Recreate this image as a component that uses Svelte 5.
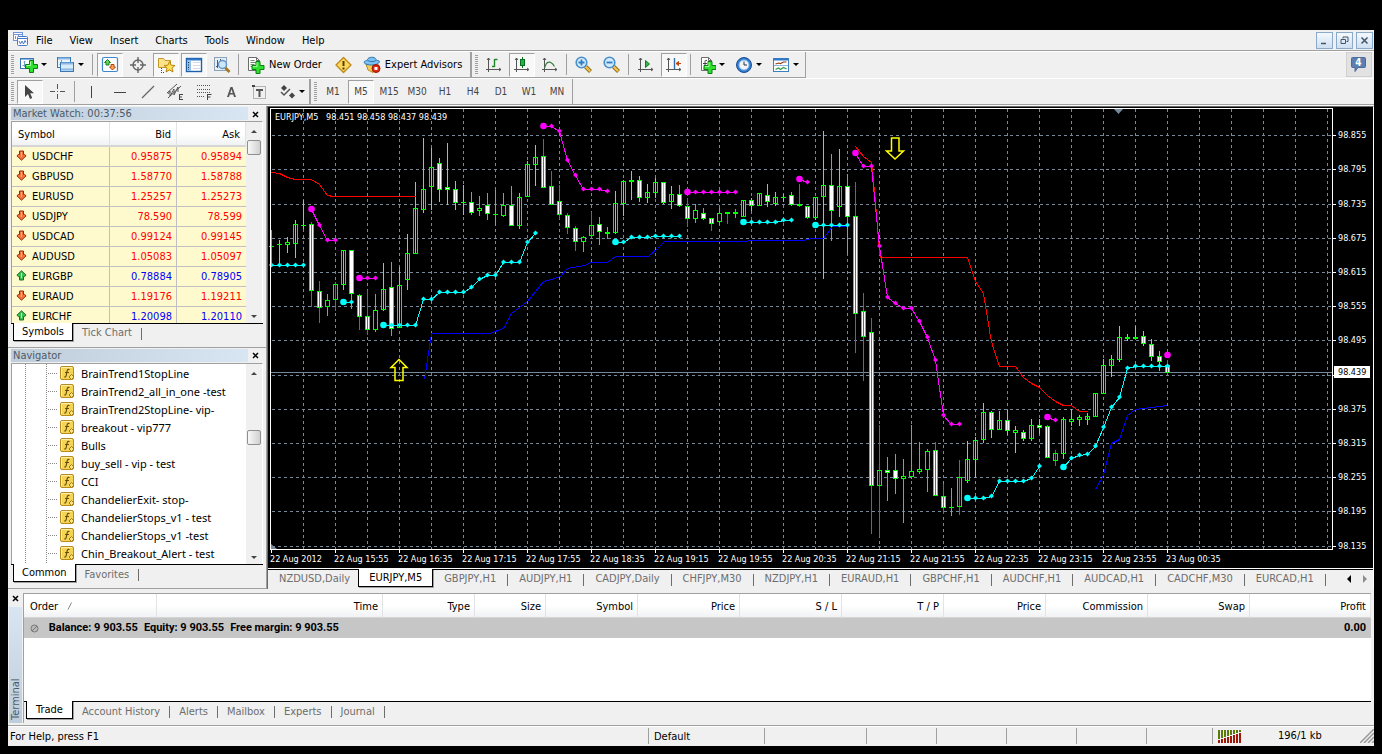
<script>
  const menus = ['File', 'View', 'Insert', 'Charts', 'Tools', 'Window', 'Help'];
  const frames = ['M1', 'M5', 'M15', 'M30', 'H1', 'H4', 'D1', 'W1', 'MN'];

  const quotes = [
    ['USDCHF', '0.95875', '0.95894', 0],
    ['GBPUSD', '1.58770', '1.58788', 0],
    ['EURUSD', '1.25257', '1.25273', 0],
    ['USDJPY', '78.590', '78.599', 0],
    ['USDCAD', '0.99124', '0.99145', 0],
    ['AUDUSD', '1.05083', '1.05097', 0],
    ['EURGBP', '0.78884', '0.78905', 1],
    ['EURAUD', '1.19176', '1.19211', 0],
    ['EURCHF', '1.20098', '1.20110', 1]
  ];

  const indicators = [
    'BrainTrend1StopLine', 'BrainTrend2_all_in_one -test', 'BrainTrend2StopLine- vip-',
    'breakout - vip777', 'Bulls', 'buy_sell - vip - test', 'CCI', 'ChandelierExit- stop-',
    'ChandelierStops_v1 - test', 'ChandelierStops_v1 -test', 'Chin_Breakout_Alert - test'
  ];

  const chartTabs = [
    'NZDUSD,Daily', 'EURJPY,M5', 'GBPJPY,H1', 'AUDJPY,H1', 'CADJPY,Daily', 'CHFJPY,M30', 'NZDJPY,H1',
    'EURAUD,H1', 'GBPCHF,H1', 'AUDCHF,H1', 'AUDCAD,H1', 'CADCHF,M30', 'EURCAD,H1'
  ];

  const columns = [
    ['Time', 226], ['Type', 92], ['Size', 71], ['Symbol', 92], ['Price', 102], ['S / L', 102],
    ['T / P', 102], ['Price', 102], ['Commission', 102], ['Swap', 102]
  ];
  const terminalTabs = ['Trade', 'Account History', 'Alerts', 'Mailbox', 'Experts', 'Journal'];

  // the 98.435 level lies under the current price tag and carries no label
  const prices = ['98.855', '98.795', '98.735', '98.675', '98.615', '98.555', '98.495', '', '98.375', '98.315', '98.255', '98.195', '98.135'];
  const priceY = [135, 169, 204, 238, 272, 306, 340, 375, 409, 443, 477, 511, 546];
  const times = ['22 Aug 2012', '22 Aug 15:55', '22 Aug 16:35', '22 Aug 17:15', '22 Aug 17:55', '22 Aug 18:35', '22 Aug 19:15', '22 Aug 19:55', '22 Aug 20:35', '22 Aug 21:15', '22 Aug 21:55', '22 Aug 22:35', '22 Aug 23:15', '22 Aug 23:55', '23 Aug 00:35'];
  const gridX = Array.from({ length: 33 }, (_, i) => 303 + 32 * i);

  // wick colour, high, low, body top, body bottom, filled
  const bars = `g 230 265 246 246 0|c 240 265 244 244 0|c 237 253 242 244 0|c 220 258 224 243 0|c 200 229 225 225 0
m 222 307 224 290 1|m 281 323 291 307 1|g 294 316 300 306 0|m 282 311 284 299 0|c 250 290 250 284 0
g 250 309 250 293 1|m 294 330 295 316 1|m 290 335 316 329 1|g 294 332 310 329 0|c 263 311 289 309 0
g 262 336 287 328 1|c 267 327 285 327 0|c 234 290 253 279 0|c 182 253 208 253 0|c 138 213 189 209 0
c 148 210 167 186 0|c 158 202 163 189 1|c 143 205 187 189 1|c 181 210 189 202 1|c 185 215 202 202 0
g 192 215 202 212 1|g 196 216 208 210 0|g 193 220 205 213 1|g 190 226 214 214 0|g 193 217 205 215 0
g 186 226 205 225 1|c 193 229 197 225 0|c 161 197 164 196 0|c 145 186 157 164 0|m 139 188 156 187 1
m 171 205 186 204 1|m 185 219 201 214 1|m 213 234 215 227 1|m 226 251 228 241 1|g 236 252 237 241 0
m 212 236 225 235 0|g 217 245 224 231 1|g 227 239 232 233 0|c 191 234 203 232 0|c 180 216 181 203 0
c 171 200 180 181 0|c 176 202 180 197 1|c 184 203 192 197 0|c 178 198 182 192 0|c 182 204 182 202 1
c 186 209 194 201 0|g 185 207 194 205 1|m 198 227 206 218 1|g 204 223 210 218 0|g 208 220 213 218 1
m 218 231 218 223 1|g 208 225 213 221 0|m 212 224 212 213 0|g 209 218 212 213 0|c 200 217 200 216 0
c 198 211 200 205 1|c 193 205 193 205 0|c 184 207 195 201 1|c 192 206 197 203 0|c 194 202 197 197 0
g 192 206 195 204 1|m 184 207 204 205 0|m 206 219 206 217 1|c 197 220 197 217 0|c 131 279 185 196 0
g 154 241 185 210 1|c 149 217 186 206 0|g 174 254 186 216 1|m 182 353 216 313 1|m 293 381 311 336 1
m 318 534 332 485 1|m 425 537 470 485 0|g 457 501 470 472 1|g 454 494 470 478 1|g 459 523 476 478 0
g 425 479 471 476 0|g 442 474 469 471 0|g 449 492 451 469 0|m 442 496 450 495 1|m 484 514 496 507 1
g 488 516 507 507 0|m 460 515 477 506 0|c 441 483 459 480 0|c 437 478 440 459 0|c 403 443 412 439 0
c 411 438 412 429 1|c 411 430 420 429 0|c 410 435 420 430 1|c 426 453 430 432 0|c 430 441 432 438 1
c 419 441 425 438 0|c 419 434 425 427 1|m 425 458 426 457 1|m 450 466 453 460 0|c 417 459 419 453 0
c 409 426 419 421 0|c 415 426 417 419 0|c 413 425 416 419 0|c 393 416 393 416 0|c 359 394 365 393 0
c 355 377 359 365 0|c 326 362 337 359 0|c 334 341 337 338 0|c 326 339 337 338 0|c 331 346 336 343 1
c 339 361 344 356 1|c 351 371 356 361 1|m 360 374 365 372 1`
    .split(/[|\n]/)
    .map((row, i) => {
      const [c, h, l, t, b, f] = row.split(' ');
      return { x: 271 + 8 * i, c, h: +h, l: +l, t: +t, b: +b, filled: f === '1' };
    });

  const bands = [
    ['#f00', '271,172 279,173 287,177 295,179 311,179 319,184 327,195 333,196 415,196'],
    ['#f00', '855,146 863,156 871,162 872,170 875,202 879,252 880,257 967,257 975,281 983,293 990,336 992,345 999,366 1015,366 1023,377 1031,383 1039,387 1047,395 1055,401 1063,405 1071,405 1079,411 1087,411'],
    ['#00f', '424,379 431,333 489,333 503,328 511,313 519,307 527,301 543,281 551,279 560,276 567,268 584,265 591,262 607,262 615,256 648,256 657,248 664,241 747,241 748,240 802,240 812,238 823,238 832,226 847,226'],
    ['#00f', '1095,489 1103,475 1111,443 1119,439 1127,415 1135,409 1150,407 1167,405']
  ];

  // stop lines: colour, first bar x, y of each bar, whether the first bar carries the large signal dot
  const stops = [
    ['#0ff', 271, [265, 265, 265, 265, 265], false],
    ['#0ff', 343, [302, 302], true],
    ['#0ff', 383, [325, 325, 325, 325, 325, 299, 299, 292, 292, 292, 292, 287, 279, 275, 275, 262, 262, 262, 242, 233], true],
    ['#0ff', 615, [242, 242, 237, 237, 237, 236, 236, 236, 236], true],
    ['#0ff', 743, [222, 222, 222, 222, 222, 220, 220], true],
    ['#0ff', 815, [225, 225, 225, 225, 225], true],
    ['#0ff', 967, [498, 498, 498, 496, 481, 481, 481, 481, 478, 466], true],
    ['#0ff', 1063, [467, 458, 455, 454, 446, 427, 407, 397, 368, 366, 366, 366, 366, 366], true],
    ['#f0f', 311, [209, 225, 240, 240], true],
    ['#f0f', 359, [278, 278, 278], true],
    ['#f0f', 543, [126, 126, 131, 160, 175, 189, 189, 189, 191], true],
    ['#f0f', 687, [192, 192, 192, 192, 192, 192, 192], true],
    ['#f0f', 799, [179, 182], true],
    ['#f0f', 855, [153, 166, 166, 246, 297, 303, 308, 308, 321, 337, 360, 415, 424, 424], true],
    ['#f0f', 1047, [417, 420], true],
    ['#f0f', 1167, [355], true]
  ].map(([color, x0, ys, big]) => ({ color, big, pts: ys.map((y, i) => [x0 + 8 * i, y]) }));

  const wick = { g: '#0f0', c: '#0ff', m: '#f0f' };

  const plus = (x, y) =>
    `<path d="M${x + 4} ${y}h4v4h4v4h-4v4h-4v-4h-4v-4h4z" fill="#2fe02f" stroke="#0b7d12"/><path d="M${x + 5} ${y + 1}v4h-4" fill="none" stroke="#a8ffa0"/>`;
  const axes = '<path d="M3.500 2v14M1 13.500h15M2 4l1.500-2L5 4M14 12l2 1.500-2 1.500" fill="none" stroke="#555"/>';
  const glass = (sign) =>
    `<path d="M10.500 10.500l5 5" stroke="#8a6414" stroke-width="4"/><path d="M10.500 10.500l4.600 4.600" stroke="#f0c14b" stroke-width="2.400"/><circle cx="6.500" cy="6.500" r="5.300" fill="#d3eafc" stroke="#4a8fcb" stroke-width="1.600"/>${sign}`;

  const icons = {
    newchart: `<rect x=".5" y="2.500" width="13" height="10" fill="#fff" stroke="#3b77b3"/><path d="M1 3.500h12" stroke="#8ab8e4"/><path d="M4.500 5v6M2.500 9.500h9M3.500 6h2M9 8v3" stroke="#6f9fcb"/>${plus(5.5, 4.5)}`,
    profiles: '<rect x=".5" y="1.500" width="13" height="10" fill="#eaf4fd" stroke="#3b77b3"/><path d="M1 2.500h12" stroke="#8ab8e4" stroke-width="2"/><path d="M4.500 4v6M2.500 8.500h4" stroke="#6f9fcb"/><rect x="3.500" y="6.500" width="13" height="9" fill="#d8ebfb" stroke="#3b77b3"/><path d="M4 7.500h12M4 13.500h12" stroke="#8ab8e4" stroke-width="2"/>',
    watch: '<rect x="1.500" y="1.500" width="15" height="14" rx="1.500" fill="#fff" stroke="#3f86cc" stroke-width="1.200"/><path d="M6.500 3.500l3 3H8v2.500H5V6.500H3.500z" fill="#6fd35a" stroke="#17801f"/><path d="M11.500 14l-3-3H10V8.500h3V11h1.500z" fill="#ffa25c" stroke="#b04a08"/>',
    target: '<circle cx="9" cy="9" r="5" fill="none" stroke="#666" stroke-width="1.400"/><path d="M9 1v6M9 11v6M1 9h6M11 9h6" stroke="#666" stroke-width="1.400"/>',
    favor: '<path d="M1.500 11.500v-9h5l1.500 2h5.500v7z" fill="#fbe28a" stroke="#c29a2a"/><path d="M4.500 12v5M6 16.500h2" stroke="#444" stroke-dasharray="1 1"/><path d="M12.500 5.500l1.600 3.700 3.900.3-3 2.600 1 3.900-3.500-2.100L9 16l1-3.900-3-2.600 3.900-.3z" fill="#ffdf5a" stroke="#b8860b"/>',
    list: '<rect x="1.500" y="2.500" width="15" height="13" fill="#fff" stroke="#1d5fa8" stroke-width="1.400"/><path d="M2 3.500h14" stroke="#2f78c8" stroke-width="2"/><rect x="2" y="5" width="4" height="10" fill="#8fc0ee"/><path d="M3.500 6v8" stroke="#223" stroke-dasharray="1 1.500"/><path d="M8 6.500h7M8 9.500h7M8 12.500h7" stroke="#d4dbe4"/>',
    tester: '<rect x="1.500" y="1.500" width="12" height="13" fill="#e7edf4" stroke="#8ba4bc"/><path d="M4.500 4v8M3 10.500h2M7.500 3v3" stroke="#556"/><path d="M12 11.500l4.500 4.500" stroke="#a8761a" stroke-width="2.600"/><circle cx="9.500" cy="8.500" r="4" fill="#cfe5fa" stroke="#5e97cd" stroke-width="1.400"/>',
    order: `<path d="M1.500 1.500h8l3 3v10h-11z" fill="#fff" stroke="#6c6c6c"/><path d="M9.500 1.500v3h3" fill="none" stroke="#6c6c6c"/><path d="M3.500 4.500h4M3.500 6.500h6M3.500 8.500h4M3.500 10.500h3" stroke="#6d8a6d"/>${plus(5, 5.5)}`,
    warn: '<path d="M8.500 1.500L16 9l-7.500 7.500L1 9z" fill="#fbd85c" stroke="#c08a1c" stroke-width="1.400" stroke-linejoin="round"/><path d="M8.500 5v5M8.500 11.500v2" stroke="#5c3b00" stroke-width="2"/>',
    expert: '<path d="M3 8l2 6 5 2.500L15.500 9z" fill="#f4cf57" stroke="#b88b1e"/><path d="M1 6.500C1 4.500 4 5 4.500 3.500 5 1 12 0 13 3.500c.5 1.500 3.500.5 3.500 2.500-2 4-13.500 4-15.500.5z" fill="#7cc0f2" stroke="#2d77b5"/><path d="M4.500 4.500c3 1.500 6 1.500 8.500 0" fill="none" stroke="#2d77b5"/><circle cx="13" cy="12.500" r="4" fill="#e0280c" stroke="#971505"/><rect x="11.500" y="11" width="3" height="3" fill="#fff"/>',
    bars: `${axes}<path d="M9.500 3v8M9.500 3.500h3M7 10.500h2.500" fill="none" stroke="#1e8a2a" stroke-width="1.400"/>`,
    candles: `${axes}<path d="M9.500 1v11" stroke="#0a6f1c"/><rect x="7.500" y="3.500" width="4" height="6" fill="#22b14c" stroke="#0a6f1c"/>`,
    line: `${axes}<path d="M3.500 12c2-7 6-8 10-1.500" fill="none" stroke="#3a7d3f" stroke-width="1.200"/>`,
    zoomin: glass('<path d="M3.500 6.500h6M6.500 3.500v6" stroke="#2f7cc0" stroke-width="1.800"/>'),
    zoomout: glass('<path d="M3.500 6.500h6" stroke="#2f7cc0" stroke-width="1.800"/>'),
    scroll: `${axes}<path d="M8.500 4.500v7l4-3.500z" fill="#35b24a" stroke="#0d7a22"/>`,
    shift: `${axes}<path d="M9.500 2v11" stroke="#2f6fb0" stroke-width="1.400"/><path d="M11.500 7.500h4.500M13.500 5.500l-2.500 2 2.500 2z" fill="#c0440c" stroke="#c0440c"/>`,
    indic: `<path d="M3.500 1.500h7l3 3v10h-10z" fill="#fff" stroke="#6c6c6c"/><path d="M10.500 1.500v3h3" fill="none" stroke="#6c6c6c"/><path d="M9 4.500c-2-.5-2 0-2 2v5c0 1.500-.5 1.500-1.500 1.500M5 7.500h4" fill="none" stroke="#444"/>${plus(6, 5.5)}`,
    clock: '<circle cx="9" cy="9" r="7.500" fill="#2f7bd0" stroke="#1c4f94"/><circle cx="9" cy="9" r="5" fill="#eef5fc" stroke="#8fbbe6"/><path d="M9 5.500V9h3" fill="none" stroke="#333"/>',
    template: '<rect x="1.500" y="2.500" width="15" height="13" fill="#fff" stroke="#3d7fbf"/><path d="M2 3.500h14" stroke="#2f78c8" stroke-width="2"/><path d="M2 9.500h14" stroke="#8ab8e4"/><path d="M3.500 8l3-1 2 .5 3-1.500h3" fill="none" stroke="#9b3a12" stroke-width="1.200"/><path d="M3.500 13.500l3-1.500 2 1.500 3-2 3 1.500" fill="none" stroke="#2f9a3c" stroke-width="1.200"/>',
    cursor: '<path d="M4 2v12l3-3 2 5 2.200-1-2-4.700H13z" fill="#444"/>',
    cross: '<path d="M8.500 1v5M8.500 11v5M1 8.500h5M11 8.500h5M8.500 8v1" stroke="#555"/>',
    vline: '<path d="M8.500 3v12" stroke="#444"/>',
    hline: '<path d="M3 9.500h12" stroke="#444"/>',
    trend: '<path d="M3 15L15 3" stroke="#666" stroke-width="1.200"/>',
    channel: '<path d="M0 10L10 1M1 15L14 3M1 11l2-3v5l4-7v6l4-8v5" fill="none" stroke="#555"/><path d="M12 11.500h4M12 14h3M12 16.500h4M12.500 11v6" stroke="#444"/>',
    fibo: '<path d="M2 2.500h14M2 6.500h14M2 9.500h14M2 13.500h8" stroke="#555" stroke-dasharray="1 1"/><path d="M12.500 11v6M12.500 11.500h4M12.500 14h3" stroke="#444"/>',
    text: '<path d="M4 14L7.500 4h2L13 14h-2l-.8-2.500H6.800L6 14zM7.300 10h2.400L8.500 6.200z" fill="#555"/>',
    label: '<rect x="2.500" y="3.500" width="12" height="12" fill="none" stroke="#777" stroke-dasharray="1 1"/><path d="M5 6h7v2H9.500v6h-2V8H5z" fill="#555"/><rect x="1" y="2" width="3" height="2" fill="#444"/>',
    arrows: '<path d="M6 2l3 3-3 3-3-3z" fill="#444"/><path d="M3 9l3 3 6-6" fill="none" stroke="#555" stroke-width="1.500"/><path d="M14 9.500l3 3-3 3-3-3z" fill="#444"/>'
  };

  const group1 = ['watch', 'target', 'favor', 'list', 'tester'];
  const pressed = ['watch', 'favor', 'list', 'candles', 'shift', 'cursor', 'M5'];
  const draw = ['vline', 'hline', 'trend', 'channel', 'fibo', 'text', 'label'];
</script>

{#snippet icon(name)}
  <svg class="icon" width="18" height="18" viewBox="0 0 18 18" aria-hidden="true">{@html icons[name]}</svg>
{/snippet}

{#snippet tool(name)}
  <button class="tool" class:pressed={pressed.includes(name)} aria-label={name}>{@render icon(name)}</button>
{/snippet}

{#snippet drop(name)}
  <button class="drop" aria-label={name}>{@render icon(name)}<span class="caret"></span></button>
{/snippet}

{#snippet scrollbar(offset)}
  <div class="scrollbar">
    <span class="arrow-up"></span>
    <span class="track"><span class="thumb" style="margin-top:{offset}px"></span></span>
    <span class="arrow-down"></span>
  </div>
{/snippet}

{#snippet cross()}
  <svg width="7" height="7" viewBox="0 0 7 7"><path d="M1 1l5 5M6 1l-5 5" stroke="#000" stroke-width="1.500" /></svg>
{/snippet}

<div class="app">
  <header class="menubar">
    <svg class="logo" width="15" height="15" viewBox="0 0 15 15" aria-hidden="true">
      <rect x=".5" y=".5" width="9" height="8" fill="#fff" stroke="#6f93dc" />
      <path d="M1 2.500h8M2.500 4v3M5.500 3v4" stroke="#6f93dc" />
      <rect x="4.500" y="4.500" width="10" height="9" rx="1" fill="#fff" stroke="#4c79d0" />
      <path d="M5 6.500h9M6 9l1.500 3L9 9l1.500 3L12 8.500l1 2" fill="none" stroke="#4c79d0" />
    </svg>
    <nav>
      {#each menus as m}<button>{m}</button>{/each}
    </nav>
    <div class="winbtns">
      <button aria-label="Minimize"><svg width="9" height="9"><path d="M1 7.500h5" stroke="#456" stroke-width="1.500" /></svg></button>
      <button aria-label="Restore"><svg width="9" height="9"><path d="M3 2.500V1h5v4.500H6.500M1 3.500h4.500v4H1z" fill="none" stroke="#456" /></svg></button>
      <button aria-label="Close"><svg width="9" height="9"><path d="M1.500 1.500l6 6M7.500 1.500l-6 6" stroke="#456" stroke-width="1.500" /></svg></button>
    </div>
  </header>

  <div class="toolbar main">
    <div class="group">
      <i class="grip"></i>
      {@render drop('newchart')}
      {@render drop('profiles')}
      <i class="sep"></i>
      {#each group1 as n}{@render tool(n)}{/each}
      <i class="sep"></i>
      <button class="wide order">{@render icon('order')}New Order</button>
      {@render tool('warn')}
      <button class="wide">{@render icon('expert')}Expert Advisors</button>
    </div>
    <div class="group">
      <i class="grip"></i>
      {@render tool('bars')}{@render tool('candles')}{@render tool('line')}
      <i class="sep"></i>
      {@render tool('zoomin')}{@render tool('zoomout')}
      <i class="sep"></i>
      {@render tool('scroll')}{@render tool('shift')}
      <i class="sep"></i>
      {@render drop('indic')}{@render drop('clock')}{@render drop('template')}
    </div>
    <button class="chat" aria-label="4 messages">
      <svg width="18" height="18" viewBox="0 0 18 18">
        <path d="M2.500 1.500h12a1 1 0 0 1 1 1v8a1 1 0 0 1-1 1H8l-3 4v-4H2.500a1 1 0 0 1-1-1v-8a1 1 0 0 1 1-1z" fill="#5b7fb0" stroke="#4a6c9c" />
        <text x="8.500" y="10" text-anchor="middle" fill="#fff" font-size="10" font-weight="700">4</text>
      </svg>
    </button>
  </div>

  <div class="toolbar lines">
    <div class="group">
      <i class="grip"></i>
      {@render tool('cursor')}{@render tool('cross')}
      <i class="sep"></i>
      {#each draw as n}{@render tool(n)}{/each}
      {@render drop('arrows')}
    </div>
    <div class="group">
      <i class="grip"></i>
      {#each frames as f}<button class="tool frame" class:pressed={pressed.includes(f)}>{f}</button>{/each}
    </div>
  </div>

  <main>
    <aside>
      <section class="panel">
        <div class="title"><h2>Market Watch: 00:37:56</h2><button class="close" aria-label="Close">{@render cross()}</button></div>
        <div class="box">
          <div class="content">
            <table class="quotes">
              <thead><tr><th>Symbol</th><th>Bid</th><th>Ask</th></tr></thead>
              <tbody>
                {#each quotes as [sym, bid, ask, rising]}
                  <tr class:rising>
                    <td>
                      <svg width="11" height="11" viewBox="0 0 11 11" aria-hidden="true">
                        {#if rising}
                          <path d="M5.500 .8l4.600 4.400-1.500 1.300H7.500v3.500h-4V6.500H2.400L.9 5.200z" fill="#3fbf4f" stroke="#11702a" /><path d="M5.500 3v5" stroke="#b8f0b8" />
                        {:else}
                          <path d="M5.500 10.200L.9 5.800l1.500-1.300h1.100V1h4v3.500h1.100l1.500 1.300z" fill="#f2743c" stroke="#982a06" /><path d="M5.500 2v5" stroke="#ffb080" />
                        {/if}
                      </svg>{sym}</td>
                    <td>{bid}</td><td>{ask}</td>
                  </tr>
                {/each}
              </tbody>
            </table>
          </div>
          {@render scrollbar(3)}
        </div>
        <div class="tabs"><button class="on">Symbols</button><button>Tick Chart</button></div>
      </section>

      <section class="panel">
        <div class="title"><h2>Navigator</h2><button class="close" aria-label="Close">{@render cross()}</button></div>
        <div class="box">
          <ul class="content tree">
            {#each indicators as name}
              <li>
                <i class="branch"></i>
                <svg width="15" height="15" viewBox="0 0 15 15" aria-hidden="true">
                  <rect x=".5" y=".5" width="13" height="13" rx="1.500" fill="#f3d455" stroke="#b98a1c" />
                  <path d="M1.500 12V1.500H12" fill="none" stroke="#fbeeb0" />
                  <path d="M9.500 3.500c-2-.6-2.300.6-2.600 2.500l-.7 3.500c-.3 1.500-.8 1.600-1.900 1.300M5 6.500h4" fill="none" stroke="#6d4c08" stroke-width="1.200" />
                  <path d="M11.500 8.500l2.500 2.500-2.500 2.500L9 11z" fill="#fbe27a" stroke="#a37a12" />
                </svg>
                <span>{name}</span>
              </li>
            {/each}
          </ul>
          {@render scrollbar(51)}
        </div>
        <div class="tabs"><button class="on">Common</button><button>Favorites</button></div>
      </section>
    </aside>

    <section class="chartpane">
      <svg class="chart" role="img" aria-label="EURJPY M5">
        <g transform="translate(-269 -107)">
          <g stroke="#778899" stroke-dasharray="3 3" shape-rendering="crispEdges">
            {#each priceY as y}<path d="M272 {y}.5H1332" />{/each}
            {#each gridX as x}<path d="M{x}.5 109V549" />{/each}
          </g>
          <path d="M271 372.500H1332" stroke="#778899" shape-rendering="crispEdges" />
          <path d="M1114 109h9l-4.500 5zM271 544v5h6z" fill="#778899" />

          <g shape-rendering="crispEdges">
            {#each bars as b}
              <rect x={b.x} y={b.h} width="1" height={b.l - b.h} fill={wick[b.c]} />
              <rect x={b.x - 2} y={b.t} width="5" height={b.b - b.t + 1} fill="#0f0" />
              {#if b.b - b.t > 1}
                <rect x={b.x - 1} y={b.t + 1} width="3" height={b.b - b.t - 1} fill={b.filled ? '#fff' : '#000'} />
              {/if}
              {#if b.c !== 'g' && b.b - b.t > 2}
                <rect x={b.x} y={b.t + 1} width="1" height={b.b - b.t - 1} fill={wick[b.c]} />
              {/if}
            {/each}
          </g>

          <g fill="none" shape-rendering="crispEdges" transform="translate(.5 .5)">
            {#each bands as [color, points]}<polyline {points} stroke={color} />{/each}
            {#each stops as s}<polyline points={s.pts.map(([x, y]) => `${x},${y}`).join(' ')} stroke={s.color} />{/each}
          </g>
          {#each stops as s}
            {#each s.pts as [x, y], i}
              {#if i === 0 && s.big}
                <circle cx={x + 0.5} cy={y} r="3.300" fill={s.color} />
              {:else}
                <path d="M{x - 2} {y}L{x}.5 {y - 2.5}L{x + 3} {y}L{x}.5 {y + 2.5}z" fill={s.color} />
              {/if}
            {/each}
          {/each}

          <g fill="none" stroke="#ff0" stroke-width="1.500">
            <path d="M399 359.500l8 8h-4v13h-8v-13h-4z" />
            <path d="M891.500 138h7.500v13h4.500l-8.500 8-8.500-8h5z" />
          </g>

          <path d="M270.500 549.500V108.500H1332.500V549.500z" fill="none" stroke="#fff" shape-rendering="crispEdges" />
          {#each priceY as y, i}
            <rect x="1333" {y} width="3" height="1" fill="#fff" />
            {#if prices[i]}<text x="1338" y={y + 3}>{prices[i]}</text>{/if}
          {/each}
          {#each times as t, i}
            <rect x={271 + 64 * i} y="550" width="1" height="3" fill="#fff" />
            <text x={270 + 64 * i} y="562">{t}</text>
          {/each}
          <rect x="1334" y="366" width="36" height="12" fill="#fff" />
          <text x="1338" y="375" class="now">98.439</text>
          <text x="275" y="120">{'EURJPY,M5   98.451 98.458 98.437 98.439'}</text>
        </g>
      </svg>
      <div class="tabs charttabs">
        {#each chartTabs as t, i}<button class:on={i === 1} class:before={i === 0}>{t}</button>{/each}
        <span class="arrows"><i class="left"></i><i class="right"></i></span>
      </div>
    </section>
  </main>

  <section class="terminal">
    <div class="side">
      <button class="close" aria-label="Close">{@render cross()}</button>
      <h2>Terminal</h2>
    </div>
    <div class="body">
      <div class="orders">
        <table>
          <colgroup>
            <col style="width:133px" />
            {#each columns as [, w]}<col style="width:{w}px" />{/each}
            <col />
          </colgroup>
          <thead>
            <tr>
              <th>Order <svg width="8" height="8" viewBox="0 0 8 8" aria-hidden="true"><path d="M1 7.500L4.500 .5" stroke="#888" /></svg></th>
              {#each columns as [c]}<th>{c}</th>{/each}
              <th>Profit</th>
            </tr>
          </thead>
          <tbody>
            <tr>
              <td colspan="11">
                <svg width="9" height="9" viewBox="0 0 9 9" aria-hidden="true"><circle cx="4.500" cy="4.500" r="3.500" fill="#bbb" stroke="#777" /><path d="M2 7l5-5" stroke="#777" /></svg>
                <span>Balance: 9 903.55</span><span>Equity: 9 903.55</span><span>Free margin: 9 903.55</span>
              </td>
              <td>0.00</td>
            </tr>
          </tbody>
        </table>
      </div>
      <div class="tabs">
        {#each terminalTabs as t, i}<button class:on={i === 0}>{t}</button>{/each}
      </div>
    </div>
  </section>

  <footer>
    <span class="help">For Help, press F1</span>
    <span class="w116">Default</span>
    <span class="w102"></span><span class="w70"></span><span class="w70"></span><span class="w70"></span><span class="w70"></span><span class="w66"></span>
    <span class="net">
      <svg width="24" height="13" viewBox="0 0 24 13" shape-rendering="crispEdges" aria-hidden="true">
        {#each [0, 1, 2, 3, 4, 5, 6, 7] as i}
          <rect x={i * 3} y="0" width="2" height={9 - i} fill="#5b7a0c" />
          <rect x={i * 3} y={10 - i} width="2" height={3 + i} fill="#a01808" />
        {/each}
      </svg>
      <b>196/1 kb</b>
      <svg width="14" height="14" viewBox="0 0 14 14" aria-hidden="true"><path d="M0 14L14 0M4 14L14 4M8 14l6-6M12 14l2-2" stroke="#999" stroke-width="1.500" /></svg>
    </span>
  </footer>
</div>

<style>
  :global(body) {
    margin: 0;
    background: #000;
  }
  .app {
    box-sizing: border-box;
    height: 100vh;
    padding: 30px 8px 8px;
    background: #000;
    display: flex;
    flex-direction: column;
    font: 11px/14px 'DejaVu Sans Condensed', 'Noto Sans', sans-serif;
    color: #000;
    overflow: hidden;
  }
  .app > * {
    background: #f0f0f0;
    box-sizing: border-box;
    flex: none;
  }
  button {
    font: inherit;
    color: inherit;
    background: none;
    border: 0;
    padding: 0;
    margin: 0;
    white-space: nowrap;
    box-sizing: border-box;
  }
  svg {
    display: block;
    flex: none;
  }
  h2 {
    font: inherit;
    margin: 0;
  }

  .menubar {
    height: 21px;
    display: flex;
    align-items: center;
    border-bottom: 1px solid #a0a0a0;
  }
  .logo {
    margin: 0 0 2px 5px;
  }
  nav {
    display: flex;
    flex: 1;
  }
  nav button {
    padding: 1px 9px 0 8px;
  }
  .winbtns {
    display: flex;
    gap: 3px;
    padding-right: 1px;
  }
  .winbtns button {
    width: 17px;
    height: 17px;
    display: grid;
    place-items: center;
    border: 1px solid #8ba9c9;
    background: linear-gradient(#f4f9fe, #cfe0f1);
  }

  .toolbar {
    height: 27px;
    display: flex;
    border-top: 1px solid #fff;
    border-bottom: 1px solid #a0a0a0;
  }
  .group {
    display: flex;
    align-items: center;
    border-right: 2px solid #a0a0a0;
    padding-right: 1px;
  }
  .main {
    border-bottom: 0;
  }
  .main .group {
    border-bottom: 1px solid #a0a0a0;
  }
  .main .group:nth-child(2) {
    border-right-width: 1px;
    padding-right: 0;
  }
  .grip {
    width: 3px;
    height: 20px;
    margin: 0 2px 0 3px;
    background: repeating-linear-gradient(#a0a0a0 0 1px, #f0f0f0 1px 2px);
  }
  .sep {
    width: 1px;
    height: 21px;
    margin: 0 3px 0 2px;
    background: #a0a0a0;
  }
  .tool {
    width: 26px;
    height: 24px;
    margin: 0 1px;
    display: grid;
    place-items: center;
    border: 1px solid transparent;
  }
  .pressed {
    background: #f8f8f8;
    border-color: #a0a0a0 #fff #fff #a0a0a0;
  }
  .frame {
    font-size: 10px;
    color: #444;
  }
  .drop {
    height: 24px;
    padding: 0 6px 0 4px;
    display: flex;
    align-items: center;
    gap: 3px;
  }
  .lines .drop {
    padding-right: 3px;
  }
  .lines .group {
    border-right-width: 1px;
  }
  .lines .group:first-child {
    border-right-width: 2px;
  }
  .caret {
    border: 3px solid transparent;
    border-top-color: #000;
    border-bottom: 0;
    width: 0;
  }
  .wide {
    height: 24px;
    padding: 0 7px 0 5px;
    display: flex;
    align-items: center;
    gap: 4px;
  }
  .order {
    padding: 0 8px 0 5px;
  }
  .chat {
    width: 26px;
    height: 25px;
    margin: 0 2px 0 auto;
    display: grid;
    place-items: center;
    border: 1px solid #d0d0d0;
    background: #e2e2e2;
  }

  main {
    display: flex;
    flex: 1 !important;
    min-height: 0;
    border-top: 1px solid #fafafa;
  }
  aside {
    width: 259px;
    flex: none;
    display: flex;
    flex-direction: column;
    border-right: 1px solid #a0a0a0;
    box-sizing: border-box;
  }
  .panel {
    flex: 1 1 0;
    min-height: 0;
    display: flex;
    flex-direction: column;
    padding: 1px 3px 0;
    border-bottom: 1px solid #a0a0a0;
  }
  .title {
    height: 14px;
    display: flex;
    color: #4c5a66;
  }
  .title h2 {
    flex: 1;
    padding-left: 2px;
    line-height: 13px;
    background: linear-gradient(90deg, #bfccd9, #d8e5f3);
    margin-bottom: 1px;
  }
  .close {
    width: 15px;
    display: grid;
    place-items: center;
  }
  .box {
    flex: 1;
    min-height: 0;
    display: flex;
    background: #fff;
    border-top: 1px solid #a0a0a0;
    border-left: 1px solid #a0a0a0;
    border-right: 1px solid #fff;
  }
  .content {
    flex: 1;
    min-width: 0;
    overflow: hidden;
    margin: 0;
    padding: 0;
  }
  .scrollbar {
    width: 16px;
    background: #f0f0f0;
    display: flex;
    flex-direction: column;
    align-items: center;
  }
  .arrow-up,
  .arrow-down {
    width: 0;
    border: 3px solid transparent;
  }
  .arrow-up {
    margin-top: 8px;
    border-top-width: 0;
    border-bottom-color: #444;
  }
  .arrow-down {
    margin-bottom: 5px;
    border-bottom-width: 0;
    border-top-color: #444;
  }
  .track {
    flex: 1;
    padding-top: 4px;
  }
  .thumb {
    display: block;
    width: 12px;
    height: 13px;
    border: 1px solid #8f8f8f;
    border-radius: 2px;
    background: linear-gradient(90deg, #f8f8f8, #d0d0d0);
  }

  table {
    border-collapse: separate;
    border-spacing: 0;
    table-layout: fixed;
    width: 100%;
  }
  th {
    font-weight: normal;
    text-align: right;
    padding: 2px 5px 0;
    background: linear-gradient(#fff 50%, #f1f2f4);
    border-right: 1px solid #e2e3e5;
    box-sizing: border-box;
  }
  th:first-child {
    text-align: left;
  }
  .quotes th {
    height: 25px;
    border-bottom: 2px solid #d5d5d5;
  }
  .quotes th:first-child {
    width: 98px;
    padding-left: 6px;
  }
  .quotes th:nth-child(2) {
    width: 67px;
  }
  .quotes td {
    height: 20px;
    box-sizing: border-box;
    padding: 0 4px;
    text-align: right;
    color: #f00;
    background: #fffacd;
    border-right: 1px solid #c0c0c0;
    border-bottom: 1px solid #c0c0c0;
  }
  .quotes td:last-child {
    border-right: 0;
  }
  .quotes .rising td {
    color: #00f;
  }
  .quotes tr td:first-child {
    color: #000;
    text-align: left;
  }
  .quotes td svg {
    display: inline-block;
    vertical-align: -1px;
    margin-right: 5px;
  }

  .tree {
    list-style: none;
    padding-top: 1px;
    font-family: 'Noto Sans', sans-serif;
    background:
      repeating-linear-gradient(#888 0 1px, transparent 1px 2px) 13px 0 / 1px 100% no-repeat,
      repeating-linear-gradient(#888 0 1px, transparent 1px 2px) 34px 0 / 1px 100% no-repeat,
      #fff;
  }
  .tree li {
    height: 18px;
    display: flex;
    align-items: center;
    white-space: nowrap;
  }
  .branch {
    width: 10px;
    height: 1px;
    margin: 0 2px 0 36px;
    background: repeating-linear-gradient(90deg, #888 0 1px, transparent 1px 2px);
  }
  .tree span {
    margin-left: 6px;
  }

  .tabs {
    height: 23px;
    display: flex;
    align-items: flex-start;
    border-top: 1px solid #000;
    color: #6d6d6d;
  }
  .tabs button {
    height: 18px;
    padding: 1px 10px 0 9px;
    display: flex;
    align-items: center;
    position: relative;
  }
  .tabs button:not(.on):not(.before)::after {
    content: '';
    position: absolute;
    right: 0;
    top: 4px;
    width: 1px;
    height: 12px;
    background: #6d6d6d;
  }
  .tabs .on {
    margin: -1px 0 0 2px;
    padding: 1px 8px 0;
    background: #fff;
    color: #000;
    border: solid #000;
    border-width: 0 1px 1px;
    box-shadow: 1px 1px 0 #a0a0a0;
  }

  .chartpane {
    flex: 1;
    min-width: 0;
    display: flex;
    flex-direction: column;
    border-left: 1px solid #696969;
    border-right: 1px solid #fff;
    border-top: 1px solid #696969;
    background: #f0f0f0;
  }
  .chart {
    width: 100%;
    flex: 1;
    min-height: 0;
    background: #000;
    box-sizing: border-box;
    border-left: 1px solid #000;
    border-right: 2px solid #000;
    overflow: hidden;
  }
  .chart text {
    font-size: 9px;
    fill: #fff;
    white-space: pre;
  }
  .chart .now {
    fill: #000;
  }
  .charttabs {
    height: 19px;
    box-shadow: 0 -1px 0 #fff;
  }
  .charttabs button {
    padding: 0 12px 0 11px;
  }
  .charttabs .before {
    padding: 0 8px 0 11px;
  }
  .charttabs .on {
    margin-left: 0;
    padding: 0 10px;
  }
  .arrows {
    margin-left: auto;
    display: flex;
    gap: 12px;
    padding: 5px 6px 0;
  }
  .arrows i {
    border: 4px solid transparent;
  }
  .arrows .left {
    border-left-width: 0;
    border-right-color: #000;
  }
  .arrows .right {
    border-right-width: 0;
    border-left-color: #8d8d8d;
  }

  .terminal {
    height: 136px;
    display: flex;
    padding: 4px 3px 2px 1px;
  }
  .side {
    width: 14px;
    display: flex;
    flex-direction: column;
  }
  .side .close {
    height: 10px;
    width: 13px;
    margin-bottom: 4px;
  }
  .side h2 {
    flex: 1;
    width: 13px;
    line-height: 13px;
    writing-mode: vertical-rl;
    transform: rotate(180deg);
    padding-top: 3px;
    color: #4c5a66;
    background: linear-gradient(#bfccd9, #d8e5f3);
  }
  .body {
    flex: 1;
    min-width: 0;
    display: flex;
    flex-direction: column;
    border-left: 1px solid #a0a0a0;
    border-top: 1px solid #a0a0a0;
  }
  .body .tabs {
    height: 21px;
  }
  .body .tabs .on {
    padding: 1px 9px 0;
  }
  .orders {
    flex: 1;
    background: #fff;
  }
  .orders th {
    height: 24px;
    padding: 2px 4px 0 6px;
    border-bottom: 1px solid #d5d5d5;
  }
  .orders th svg {
    display: inline-block;
    margin-left: 6px;
  }
  .orders td {
    height: 20px;
    padding: 0 5px 0 6px;
    box-sizing: border-box;
    background: #c6c6c6;
    font-family: Roboto, sans-serif;
    font-weight: bold;
    text-align: right;
  }
  .orders tr td:first-child {
    text-align: left;
  }
  .orders td svg {
    display: inline-block;
    vertical-align: -2px;
    margin-right: 7px;
  }
  .orders td span {
    margin-right: 6px;
  }

  footer {
    height: 21px;
    display: flex;
    align-items: center;
    border-top: 1px solid #a0a0a0;
    box-shadow: inset 0 1px 0 #fff;
  }
  footer span {
    height: 16px;
    line-height: 18px;
    box-sizing: border-box;
    border-left: 1px solid #a0a0a0;
    padding-left: 5px;
  }
  footer .help {
    flex: 1;
    border: 0;
    padding-left: 2px;
  }
  .w116 {
    width: 116px;
  }
  .w102 {
    width: 102px;
  }
  .w70 {
    width: 70px;
  }
  .w66 {
    width: 66px;
  }
  footer .net {
    width: 162px;
    display: flex;
    align-items: center;
  }
  .net b {
    flex: 1;
    font-weight: normal;
    margin-left: 36px;
  }
</style>
